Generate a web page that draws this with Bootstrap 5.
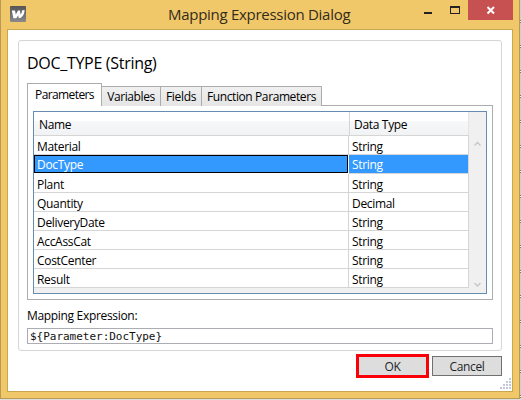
<!DOCTYPE html>
<html lang="en">
<head>
<meta charset="utf-8">
<title>Mapping Expression Dialog</title>
<link href="https://cdn.jsdelivr.net/npm/bootstrap@5.3.0/dist/css/bootstrap.min.css" rel="stylesheet">
<style>
body{width:521px;height:400px;overflow:hidden;background:#dcdcdc;font-family:"Open Sans","Noto Sans",sans-serif;font-size:12px;line-height:16px;color:#000;letter-spacing:-.32px}
.desk{width:521px;height:400px;background:repeating-linear-gradient(#cfcfcf 0 20px,#777 20px 21px,#fff 21px 22px,#777 22px 23px,#cfcfcf 23px 25px)}
.win{width:520px;height:399px;background:#f0c869;border:1px solid #b99a50;border-top:0;padding:0 6px}
.foot{width:521px;height:1px;background:#dedede}
.titlebar{height:29px}
.logo{margin:6px 0 0 3px}
.title-text{font-size:15px;line-height:29px;color:#332c1c;padding-left:142px;letter-spacing:-.28px;white-space:nowrap}
.close-btn{width:45px;height:20px;background:#c75050}
.client{height:363px;border:1px solid #c9a650;background:#fff;padding:10px}
.panel{height:311px;border:1px solid #d5d5d5;border-radius:3px;padding:11px 8px 0}
.heading{font-size:16px;line-height:22px;height:31px;white-space:nowrap;letter-spacing:-.3px}
.tabs{height:23px;position:relative;z-index:1}
.tabs .tab{height:20px;border:1px solid #acacac;border-left-width:0;border-bottom:0;background:linear-gradient(#f0f0f0,#e5e5e5);text-align:center;line-height:20px;white-space:nowrap}
.tabs .tab.on{height:23px;width:75px;border-left-width:1px;background:#fff;line-height:22px;letter-spacing:-.6px}
.tabs .t-var{width:59px;letter-spacing:-.4px}.t-fld{width:41px}.tabs .t-fun{width:120px;letter-spacing:-.4px}
.pane{height:195px;border:1px solid #acacac;padding:5px;margin-top:-1px}
.gridbox{height:183px;border:1px solid #688caf;background:#f0f0f0}
.hd{height:24px;background:linear-gradient(#fff 0 40%,#f7f8fa 40%,#f1f2f4);border-bottom:1px solid #d5d5d5}
.hd>div{line-height:26px}
.c1{width:315px;border-right:1px solid #d5d5d5;padding-left:3px}
.c2{width:120px;border-right:1px solid #d5d5d5;padding-left:3px}
.hd .c1{padding-left:5px;width:316px}.hd .c2{padding-left:4px;width:119px;border-right-color:#e5e5e5}
.rw{height:19px;width:435px;background:#fff;line-height:21px}
.rw>div{height:19px;border-bottom:1px solid #d5d5d5}
.rw.sel{color:#fff}.rw.sel>div{background:#39f;line-height:20px}
.rw.sel .c1{height:18px;width:314px;margin-right:1px;border:1px solid #000;padding-left:3px;text-indent:-1px;line-height:18px}
.rail{padding:4px 5px 3px 0}
.lbl{margin-top:7px;height:21px;line-height:17px}
.inp{height:16px;border:1px solid #abadb3;padding-left:2px;font-family:"DejaVu Sans Mono",monospace;font-size:11px;line-height:15px;letter-spacing:-.02px;color:#111}
.btns{margin-top:3px}
.b-ok{width:73px;height:24px;border:3px solid #fa0008;background:#ddd;line-height:19px}
.b-cancel{width:70px;height:20px;margin:2px 0 0 3px;border:1px solid #707070;background:#ddd;line-height:19px}
.btn{padding:0;border-radius:0;font-size:12px;letter-spacing:-.35px}
.grip{margin:0 -9px 0 0}
</style>
<script src="https://cdn.jsdelivr.net/npm/bootstrap@5.3.0/dist/js/bootstrap.bundle.min.js"></script>
</head>
<body>
<div class="desk">
<div class="win">
  <div class="titlebar d-flex align-items-start">
    <svg class="logo flex-shrink-0" width="16" height="16" viewBox="0 0 16 16"><defs><linearGradient id="g" x2="0" y2="1"><stop stop-color="#555"/><stop offset="1" stop-color="#8a8a8a"/></linearGradient></defs><rect width="16" height="16" rx="1" fill="url(#g)"/><path d="M1.8 4.5H5L5.8 8.5 8 4.5H10L10.5 8.5C11.6 7.5 12 6 11.8 4.4L14.6 4C14.5 8.5 12.3 11.7 8.8 12.3L8.2 9.3 6.3 12.3H3.4Z" fill="#fff"/></svg>
    <div class="title-text">Mapping Expression Dialog</div>
    <div class="ms-auto d-flex">
      <svg width="44" height="20"><path d="M0 12h8v2H0z" fill="#222"/><path d="M26 6h10v8H26zM27 8v5h8V8z" fill="#222" fill-rule="evenodd"/></svg>
      <div class="close-btn"><svg class="d-block" width="45" height="20"><path d="M19.5 7 26 13.5M26 7 19.5 13.5" stroke="#fff" stroke-width="2"/></svg></div>
    </div>
  </div>
  <div class="client">
    <div class="panel">
      <div class="heading">DOC_TYPE (String)</div>
      <div class="tabs d-flex align-items-end">
        <div class="tab on">Parameters</div><div class="tab t-var">Variables</div><div class="tab t-fld">Fields</div><div class="tab t-fun">Function Parameters</div>
      </div>
      <div class="pane">
        <div class="gridbox d-flex justify-content-between">
          <div>
            <div class="hd d-flex"><div class="c1">Name</div><div class="c2">Data Type</div></div>
            <div class="rw d-flex"><div class="c1">Material</div><div class="c2">String</div></div>
            <div class="rw sel d-flex"><div class="c1">DocType</div><div class="c2">String</div></div>
            <div class="rw d-flex"><div class="c1">Plant</div><div class="c2">String</div></div>
            <div class="rw d-flex"><div class="c1">Quantity</div><div class="c2">Decimal</div></div>
            <div class="rw d-flex"><div class="c1">DeliveryDate</div><div class="c2">String</div></div>
            <div class="rw d-flex"><div class="c1">AccAssCat</div><div class="c2">String</div></div>
            <div class="rw d-flex"><div class="c1">CostCenter</div><div class="c2">String</div></div>
            <div class="rw d-flex"><div class="c1">Result</div><div class="c2">String</div></div>
          </div>
          <div class="rail d-flex flex-column justify-content-between">
            <svg width="7" height="30"><path d="M.5 29.5 3.5 26.5 6.5 29.5" fill="none" stroke="#c6c6c6" stroke-width="1.3"/></svg>
            <svg width="7" height="8"><path d="M.5 1 3.5 4 6.5 1" fill="none" stroke="#c6c6c6" stroke-width="1.3"/></svg>
          </div>
        </div>
      </div>
      <div class="lbl">Mapping Expression:</div>
      <div class="inp">${Parameter:DocType}</div>
    </div>
    <div class="btns d-flex justify-content-end"><button class="btn b-ok">OK</button><button class="btn b-cancel">Cancel</button></div>
    <div class="d-flex justify-content-end"><svg class="grip" width="11" height="11" fill="#c3c8d6"><path d="M9 0h2v2H9zM9 3h2v2H9zM9 6h2v2H9zM9 9h2v2H9zM6 3h2v2H6zM6 6h2v2H6zM6 9h2v2H6zM3 6h2v2H3zM3 9h2v2H3zM0 9h2v2H0z"/></svg></div>
  </div>
</div>
<div class="foot"></div>
</div>
</body>
</html>
